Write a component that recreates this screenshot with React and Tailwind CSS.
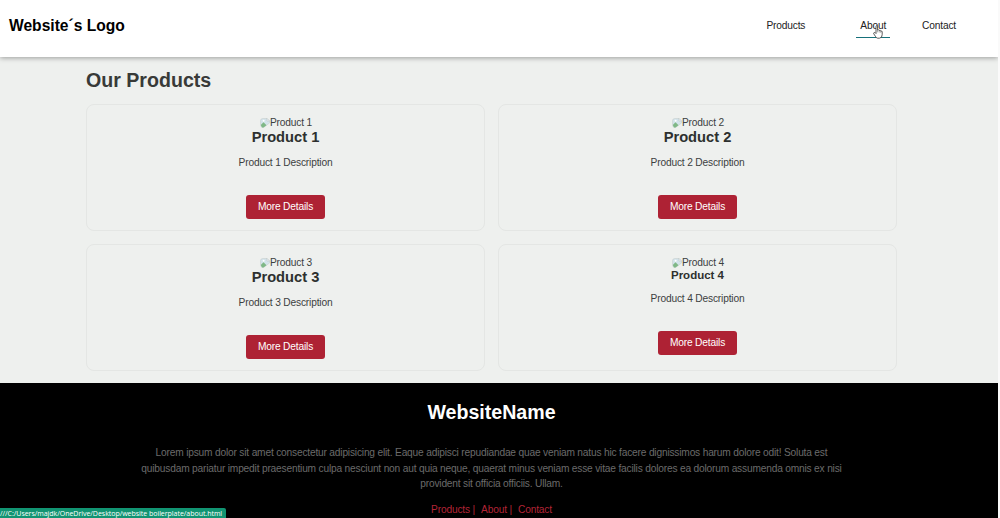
import clsx from 'clsx';

const products = [
  { id: 1, name: 'Product 1' },
  { id: 2, name: 'Product 2' },
  { id: 3, name: 'Product 3' },
  { id: 4, name: 'Product 4', small: true },
];

const BrokenImage = () => (
  <svg width="10" height="10" viewBox="0 0 10 10" className="shrink-0">
    <path d="M2.5 .5H7L9.5 3V5L3.5 9.5H2.5Q.5 9 .5 7V2.5Q.5 .8 2.5 .5Z" fill="#d3e3ea" stroke="#c3cbc9" strokeWidth=".5" />
    <path d="M.8 7L3.5 4.2L6.5 7.3L3.5 9.5H2Z" fill="#7fb886" />
    <circle cx="3.6" cy="2.7" r="1" fill="#fff" />
    <path d="M7 .5V3H9.5Z" fill="#fafafa" stroke="#b5bfbd" strokeWidth=".5" />
  </svg>
);

const HandCursor = () => (
  <svg width="10" height="14" viewBox="0 0 10 14" className="absolute left-[13px] top-[7px]">
    <path
      d="M3 8V1.6Q3 .6 3.8 .6T4.6 1.6V5Q5.9 4.4 6.2 5.4Q7.4 4.9 7.7 6Q9.2 5.6 9.2 7V9.6Q9.2 13 6.4 13.2H4.6Q3.2 13 2.3 11.2L.7 8.7Q.5 7.6 1.6 7.5Q2.3 7.5 3 8.5Z"
      fill="#fff"
      stroke="#333"
      strokeWidth=".8"
    />
    <path d="M4.6 5V7.3M6.2 5.5V7.5M7.7 6V7.8" stroke="#555" strokeWidth=".5" />
  </svg>
);

const Header = () => (
  <header className="relative flex h-[57px] items-start justify-between bg-white pl-[9px] pr-[42px] shadow-[0_1px_5px_rgba(0,0,0,0.35)]">
    <h1 className="mt-4 text-[15.6px] font-bold leading-5 tracking-normal text-black">Website´s Logo</h1>
    <nav className="mt-[18px] flex leading-4 text-[#222]">
      <a className="mr-[55px]">Products</a>
      <a className="relative mr-[36px]">
        About
        <span className="absolute -left-1 top-[19px] h-px w-[34px] bg-[#16707a]" />
        <HandCursor />
      </a>
      <a>Contact</a>
    </nav>
  </header>
);

const ProductCard = ({ product }) => (
  <div className="flex h-[127px] flex-col items-center rounded-[8px] border border-[#e4e6e4] pt-[10px]">
    <div className="flex h-4 items-center pl-px leading-4">
      <BrokenImage />
      <span>{product.name}</span>
    </div>
    <h2
      className={clsx(
        'font-bold tracking-normal text-[#2d302f]',
        product.small ? 'h-[10px] text-[11.5px] leading-[9px]' : 'h-[14px] text-[14.7px] leading-[13px]'
      )}
    >
      {product.name}
    </h2>
    <p className="mt-[10px] leading-4">{product.name} Description</p>
    <button className="mt-6 h-6 w-[79px] rounded-[3px] bg-[#ae2234] leading-6 text-white">More Details</button>
  </div>
);

const Footer = () => (
  <footer className="h-[135px] bg-black pr-[15px] text-center">
    <h2 className="pt-[17px] text-[19.6px] font-bold leading-6 tracking-normal text-white">WebsiteName</h2>
    <p className="mx-auto mt-[21px] w-[708px] leading-[15.7px] tracking-[-0.19px] text-[#6b6b6b]">
      Lorem ipsum dolor sit amet consectetur adipisicing elit. Eaque adipisci repudiandae quae veniam natus hic facere
      dignissimos harum dolore odit! Soluta est quibusdam pariatur impedit praesentium culpa nesciunt non aut quia
      neque, quaerat minus veniam esse vitae facilis dolores ea dolorum assumenda omnis ex nisi provident sit officia
      officiis. Ullam.
    </p>
    <div className="mt-[10px] flex justify-center gap-[6px] leading-4 text-[#b32436]">
      <span>Products |</span>
      <span>About |</span>
      <span>Contact</span>
    </div>
  </footer>
);

const App = () => {
  return (
    <div className="relative h-[518px] overflow-hidden bg-[#fafafa] pr-[2px] font-['Liberation_Sans',Arial,sans-serif] text-[10.2px] tracking-[-0.17px] text-[#3c403e]">
      <div className="h-full overflow-hidden bg-[#eef0ee]">
        <Header />
        <main className="ml-[86px] h-[326px] w-[811px] pt-[11px]">
          <h1 className="text-[19.6px] font-bold leading-6 tracking-normal text-[#383a38]">Our Products</h1>
          <div className="mt-3 grid grid-cols-2 gap-[13px]">
            {products.map((product) => (
              <ProductCard key={product.id} product={product} />
            ))}
          </div>
        </main>
        <Footer />
      </div>

      {/* Link status bar */}
      <div className="absolute bottom-0 left-0 h-[10px] w-[226px] whitespace-nowrap rounded-tr-[2px] bg-[#119472] font-['Open_Sans',sans-serif] text-[7px] leading-[12px] tracking-[-0.03px] text-white">
        ///C:/Users/majdk/OneDrive/Desktop/website boilerplate/about.html
      </div>
    </div>
  );
};

export default App;
